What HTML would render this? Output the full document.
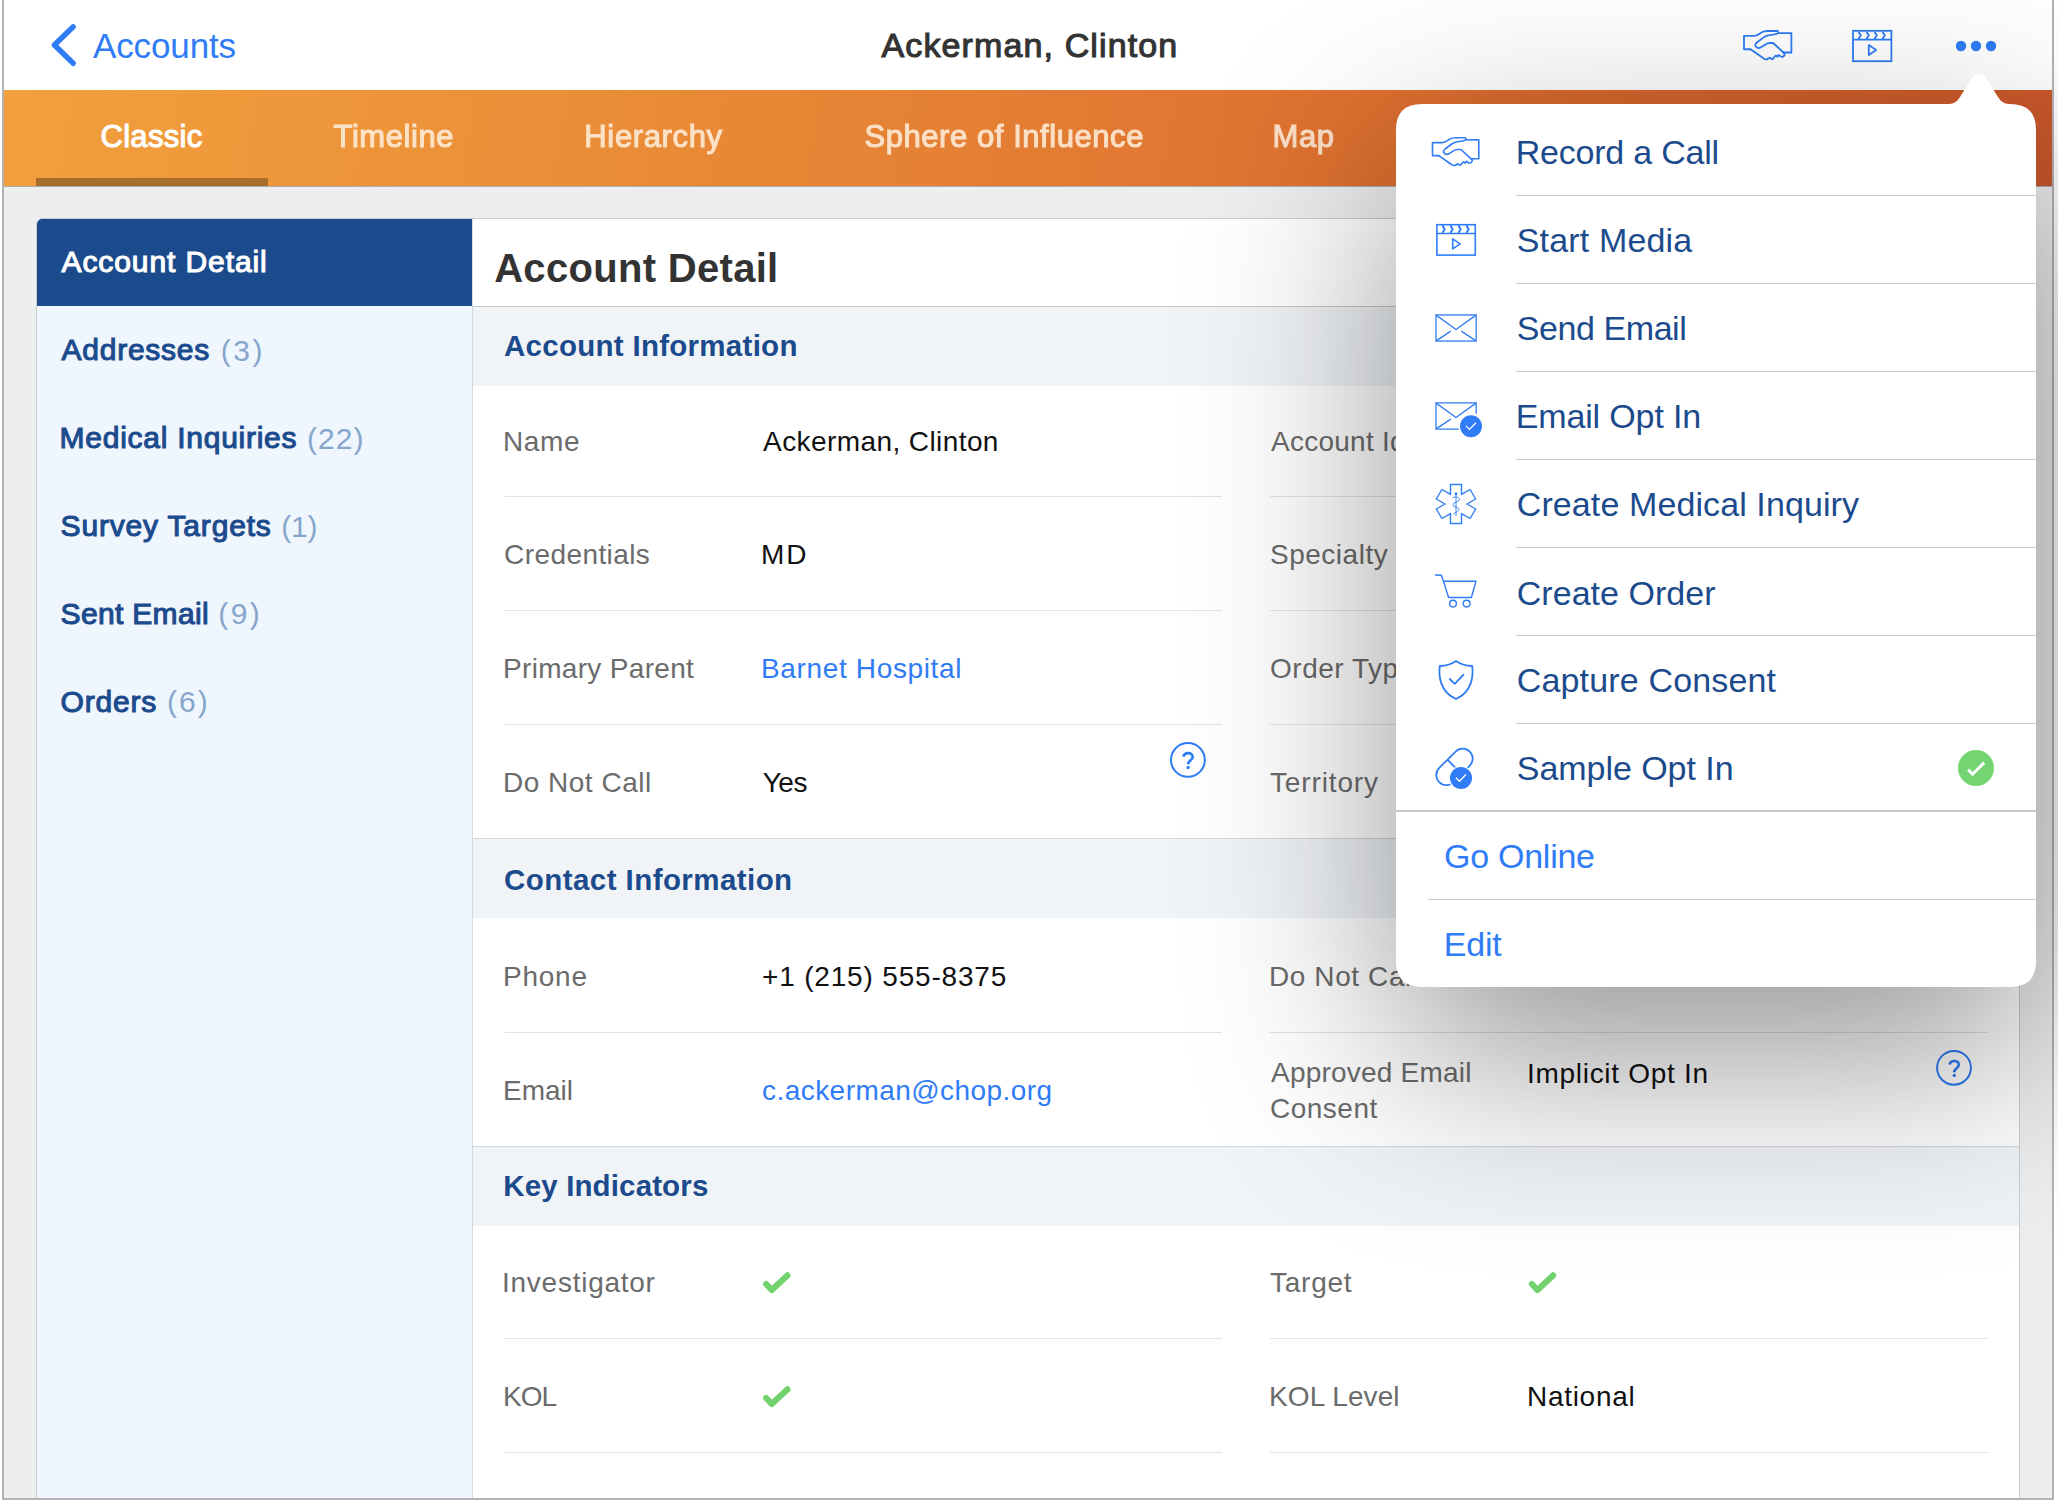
<!DOCTYPE html>
<html><head><meta charset="utf-8"><style>
html,body{margin:0;padding:0;width:2058px;height:1502px;overflow:hidden;background:#fff}
.a{position:absolute}
.t{position:absolute;white-space:nowrap;font-family:"Liberation Sans",sans-serif}
</style></head><body>
<div class="a" style="left:0px;top:0px;width:2058px;height:1502px;background:#ffffff;"></div>
<div class="a" style="left:4px;top:186px;width:2048px;height:1312px;background:#edeef0;"></div>
<div class="a" style="left:4px;top:0px;width:2048px;height:90px;background:#ffffff;"></div>
<div class="a" style="left:4px;top:90px;width:2048px;height:96px;background:linear-gradient(100deg,#f2a03d 0%,#ec9239 22%,#e58034 46%,#dd6e2f 70%,#c9572a 100%);"></div>
<div class="a" style="left:4px;top:186px;width:2048px;height:1px;background:#a9adb2;"></div>
<div class="a" style="left:36px;top:178px;width:232px;height:8px;background:#a86e2b;"></div>
<div class="t" style="left:100.43px;top:121.42px;font-size:31px;line-height:31px;font-weight:normal;color:#ffffff;letter-spacing:0.337px;-webkit-text-stroke:1.1px #ffffff;">Classic</div>
<div class="t" style="left:333.55px;top:121.42px;font-size:31px;line-height:31px;font-weight:normal;color:#fff0de;letter-spacing:0.557px;-webkit-text-stroke:1.1px #fff0de;opacity:0.86;">Timeline</div>
<div class="t" style="left:584.37px;top:121.42px;font-size:31px;line-height:31px;font-weight:normal;color:#fff0de;letter-spacing:0.628px;-webkit-text-stroke:1.1px #fff0de;opacity:0.86;">Hierarchy</div>
<div class="t" style="left:864.49px;top:121.42px;font-size:31px;line-height:31px;font-weight:normal;color:#fff0de;letter-spacing:0.560px;-webkit-text-stroke:1.1px #fff0de;opacity:0.86;">Sphere of Influence</div>
<div class="t" style="left:1272.55px;top:121.42px;font-size:31px;line-height:31px;font-weight:normal;color:#fff0de;letter-spacing:0.510px;-webkit-text-stroke:1.1px #fff0de;opacity:0.86;">Map</div>
<div class="t" style="left:92.94px;top:27.91px;font-size:35.0px;line-height:35.0px;font-weight:normal;color:#2f7cf6;letter-spacing:-0.117px;">Accounts</div>
<div class="t" style="left:881.55px;top:27.87px;font-size:34px;line-height:34px;font-weight:normal;color:#333333;letter-spacing:1.119px;-webkit-text-stroke:1.1px #333333;">Ackerman, Clinton</div>
<div class="a" style="left:36px;top:218px;width:1984px;height:1281px;background:#ffffff;border:1px solid #c9cbce;box-sizing:border-box;border-radius:6px 6px 0 0;"></div>
<div class="a" style="left:37px;top:219px;width:435px;height:1279px;background:#eff6fd;"></div>
<div class="a" style="left:472px;top:219px;width:1px;height:1279px;background:#d6d9dd;"></div>
<div class="a" style="left:37px;top:219px;width:435px;height:87px;background:#1c4b8d;border-top-left-radius:5px;"></div>
<div class="t" style="left:61.55px;top:246.95px;font-size:30px;line-height:30px;font-weight:normal;color:#ffffff;letter-spacing:0.906px;-webkit-text-stroke:1.1px #ffffff;">Account Detail</div>
<div class="t" style="left:61.55px;top:335.29px;font-size:30px;line-height:30px;font-weight:normal;color:#1c4b8d;letter-spacing:0.752px;-webkit-text-stroke:1.1px #1c4b8d;">Addresses</div>
<div class="t" style="left:220.82px;top:335.99px;font-size:30px;line-height:30px;font-weight:normal;color:#86a6cc;letter-spacing:2.470px;">(3)</div>
<div class="t" style="left:59.55px;top:422.95px;font-size:30px;line-height:30px;font-weight:normal;color:#1c4b8d;letter-spacing:0.744px;-webkit-text-stroke:1.1px #1c4b8d;">Medical Inquiries</div>
<div class="t" style="left:307.00px;top:423.65px;font-size:30px;line-height:30px;font-weight:normal;color:#86a6cc;letter-spacing:1.020px;">(22)</div>
<div class="t" style="left:60.55px;top:510.61px;font-size:30px;line-height:30px;font-weight:normal;color:#1c4b8d;letter-spacing:0.829px;-webkit-text-stroke:1.1px #1c4b8d;">Survey Targets</div>
<div class="t" style="left:281.24px;top:512.01px;font-size:30px;line-height:30px;font-weight:normal;color:#86a6cc;letter-spacing:-0.180px;">(1)</div>
<div class="t" style="left:60.55px;top:598.79px;font-size:30px;line-height:30px;font-weight:normal;color:#1c4b8d;letter-spacing:0.336px;-webkit-text-stroke:1.1px #1c4b8d;">Sent Email</div>
<div class="t" style="left:218.30px;top:599.49px;font-size:30px;line-height:30px;font-weight:normal;color:#86a6cc;letter-spacing:2.410px;">(9)</div>
<div class="t" style="left:60.55px;top:686.63px;font-size:30px;line-height:30px;font-weight:normal;color:#1c4b8d;letter-spacing:0.828px;-webkit-text-stroke:1.1px #1c4b8d;">Orders</div>
<div class="t" style="left:167.00px;top:687.33px;font-size:30px;line-height:30px;font-weight:normal;color:#86a6cc;letter-spacing:2.030px;">(6)</div>
<div class="a" style="left:473px;top:306px;width:1546px;height:1px;background:#c8c8c8;"></div>
<div class="t" style="left:494.18px;top:248.20px;font-size:40px;line-height:40px;font-weight:bold;color:#333333;letter-spacing:0.308px;">Account Detail</div>
<div class="a" style="left:473px;top:307px;width:1546px;height:79px;background:#f1f4f7;"></div>
<div class="t" style="left:504.00px;top:330.89px;font-size:29.5px;line-height:29.5px;font-weight:bold;color:#1c4b8d;letter-spacing:0.278px;">Account Information</div>
<div class="a" style="left:473px;top:838px;width:1546px;height:1px;background:#d4d6d9;"></div>
<div class="a" style="left:473px;top:839px;width:1546px;height:79px;background:#f1f4f7;"></div>
<div class="t" style="left:504.12px;top:864.55px;font-size:29.5px;line-height:29.5px;font-weight:bold;color:#1c4b8d;letter-spacing:0.431px;">Contact Information</div>
<div class="a" style="left:473px;top:1146px;width:1546px;height:1px;background:#d4d6d9;"></div>
<div class="a" style="left:473px;top:1147px;width:1546px;height:79px;background:#f1f4f7;"></div>
<div class="t" style="left:503.30px;top:1171.07px;font-size:29.5px;line-height:29.5px;font-weight:bold;color:#1c4b8d;letter-spacing:0.131px;">Key Indicators</div>
<div class="a" style="left:505px;top:496px;width:717px;height:1px;background:#e3e3e3;"></div>
<div class="a" style="left:1270px;top:496px;width:718px;height:1px;background:#e3e3e3;"></div>
<div class="a" style="left:505px;top:610px;width:717px;height:1px;background:#e3e3e3;"></div>
<div class="a" style="left:1270px;top:610px;width:718px;height:1px;background:#e3e3e3;"></div>
<div class="a" style="left:505px;top:724px;width:717px;height:1px;background:#e3e3e3;"></div>
<div class="a" style="left:1270px;top:724px;width:718px;height:1px;background:#e3e3e3;"></div>
<div class="a" style="left:505px;top:1032px;width:717px;height:1px;background:#e3e3e3;"></div>
<div class="a" style="left:1270px;top:1032px;width:718px;height:1px;background:#e3e3e3;"></div>
<div class="a" style="left:505px;top:1338px;width:717px;height:1px;background:#e3e3e3;"></div>
<div class="a" style="left:1270px;top:1338px;width:718px;height:1px;background:#e3e3e3;"></div>
<div class="a" style="left:505px;top:1452px;width:717px;height:1px;background:#e3e3e3;"></div>
<div class="a" style="left:1270px;top:1452px;width:718px;height:1px;background:#e3e3e3;"></div>
<div class="t" style="left:503.00px;top:427.70px;font-size:28px;line-height:28px;font-weight:normal;color:#6b6b6b;letter-spacing:0.627px;">Name</div>
<div class="t" style="left:763.06px;top:427.70px;font-size:28px;line-height:28px;font-weight:normal;color:#111111;letter-spacing:0.415px;">Ackerman, Clinton</div>
<div class="t" style="left:504.00px;top:541.04px;font-size:28px;line-height:28px;font-weight:normal;color:#6b6b6b;letter-spacing:0.424px;">Credentials</div>
<div class="t" style="left:761.06px;top:541.04px;font-size:28px;line-height:28px;font-weight:normal;color:#111111;letter-spacing:1.940px;">MD</div>
<div class="t" style="left:503.00px;top:655.20px;font-size:28px;line-height:28px;font-weight:normal;color:#6b6b6b;letter-spacing:0.317px;">Primary Parent</div>
<div class="t" style="left:761.06px;top:655.20px;font-size:28px;line-height:28px;font-weight:normal;color:#2f7cf6;letter-spacing:0.643px;">Barnet Hospital</div>
<div class="t" style="left:503.00px;top:769.04px;font-size:28px;line-height:28px;font-weight:normal;color:#6b6b6b;letter-spacing:0.500px;">Do Not Call</div>
<div class="t" style="left:762.76px;top:769.04px;font-size:28px;line-height:28px;font-weight:normal;color:#111111;letter-spacing:-0.500px;">Yes</div>
<div class="t" style="left:503.00px;top:963.04px;font-size:28px;line-height:28px;font-weight:normal;color:#6b6b6b;letter-spacing:0.750px;">Phone</div>
<div class="t" style="left:762.06px;top:963.04px;font-size:28px;line-height:28px;font-weight:normal;color:#111111;letter-spacing:0.816px;">+1 (215) 555-8375</div>
<div class="t" style="left:503.00px;top:1077.04px;font-size:28px;line-height:28px;font-weight:normal;color:#6b6b6b;letter-spacing:0.000px;">Email</div>
<div class="t" style="left:762.06px;top:1077.04px;font-size:28px;line-height:28px;font-weight:normal;color:#2f7cf6;letter-spacing:0.444px;">c.ackerman@chop.org</div>
<div class="t" style="left:502.00px;top:1269.04px;font-size:28px;line-height:28px;font-weight:normal;color:#6b6b6b;letter-spacing:0.744px;">Investigator</div>
<div class="t" style="left:503.00px;top:1383.04px;font-size:28px;line-height:28px;font-weight:normal;color:#6b6b6b;letter-spacing:-1.000px;">KOL</div>
<div class="t" style="left:1271.00px;top:427.54px;font-size:28px;line-height:28px;font-weight:normal;color:#6b6b6b;letter-spacing:0.256px;">Account Identifier</div>
<div class="t" style="left:1270.00px;top:541.04px;font-size:28px;line-height:28px;font-weight:normal;color:#6b6b6b;letter-spacing:0.507px;">Specialty</div>
<div class="t" style="left:1270.00px;top:655.04px;font-size:28px;line-height:28px;font-weight:normal;color:#6b6b6b;letter-spacing:0.517px;">Order Type</div>
<div class="t" style="left:1270.00px;top:769.04px;font-size:28px;line-height:28px;font-weight:normal;color:#6b6b6b;letter-spacing:0.868px;">Territory</div>
<div class="t" style="left:1269.00px;top:963.04px;font-size:28px;line-height:28px;font-weight:normal;color:#6b6b6b;letter-spacing:0.600px;">Do Not Call</div>
<div class="t" style="left:1271.00px;top:1058.88px;font-size:28px;line-height:28px;font-weight:normal;color:#6b6b6b;letter-spacing:0.212px;">Approved Email</div>
<div class="t" style="left:1270.00px;top:1094.52px;font-size:28px;line-height:28px;font-weight:normal;color:#6b6b6b;letter-spacing:0.500px;">Consent</div>
<div class="t" style="left:1526.94px;top:1059.54px;font-size:28px;line-height:28px;font-weight:normal;color:#111111;letter-spacing:0.719px;">Implicit Opt In</div>
<div class="t" style="left:1270.00px;top:1269.04px;font-size:28px;line-height:28px;font-weight:normal;color:#6b6b6b;letter-spacing:0.752px;">Target</div>
<div class="t" style="left:1269.00px;top:1383.04px;font-size:28px;line-height:28px;font-weight:normal;color:#6b6b6b;letter-spacing:0.110px;">KOL Level</div>
<div class="t" style="left:1527.00px;top:1383.04px;font-size:28px;line-height:28px;font-weight:normal;color:#111111;letter-spacing:0.706px;">National</div>
<svg class="a" style="left:0;top:0" width="2058" height="1502"><path d="M73.2,26.8 L54.4,45 L73.2,63.3" fill="none" stroke="#2f7cf6" stroke-width="5.4" stroke-linecap="round" stroke-linejoin="round"/><g transform="translate(1731.21,12.80) scale(1.0235)" stroke="#2f7cf6"><g fill="none" stroke-width="1.75875" stroke-linejoin="round" stroke-linecap="round"><path d="M18,35.6 L12.5,35.6 L12.5,22.5 L22,22.6 C25.5,22.6 27.5,20.5 29.5,19.3 C31.5,18 33.5,17.8 35,17.8 L45.3,17.8 L46.3,19.8 L58.8,19.9 L58.8,38.8 L51,38.8"/><path d="M45.8,19.9 C44.5,21 41.5,21.3 39,21.5 C36,21.8 34,22.5 32.5,23.5 L25,29 C22.5,31 23.5,34.6 27,34.4 C29,34.3 31,32.4 33,31.1 C35,29.8 36,29.5 37.5,29.5 L41,29.5 L51,38.8"/><path d="M18,35.6 C19,35.6 19.6,36 20.6,36.8 L31.5,44.5 C33,45.7 34.5,45.8 36,45 L37.5,43.8 L39.5,45 C40.6,45.6 41.6,44.6 41.6,43.5 L43.6,41.8 L45.2,43 L46.2,41.3 L48.6,42.8 C50,43.5 51.5,42.5 52,41.5 C52.5,40.5 52.2,39.5 51,38.8"/></g></g><g transform="translate(1852.20,30.00) scale(1.0000)" stroke="#2f7cf6"><g fill="none" stroke-width="1.8"><rect x="0.8" y="0.8" width="38.4" height="30.4"/><path d="M0.8,9.6 L39.2,9.6"/><path d="M6.2,1.4 L8.6,5.3 L6.2,9.2 M14.2,1.4 L16.6,5.3 L14.2,9.2 M22.2,1.4 L24.6,5.3 L22.2,9.2 M30.2,1.4 L32.6,5.3 L30.2,9.2" stroke-linejoin="round" stroke-width="1.9"/><path d="M16.6,15 L16.6,25 L24,20 Z" stroke-linejoin="round"/></g></g><circle cx="1961" cy="46" r="5.2" fill="#2f7cf6"/><circle cx="1976" cy="46" r="5.2" fill="#2f7cf6"/><circle cx="1991" cy="46" r="5.2" fill="#2f7cf6"/><g transform="translate(1187.9,759.9)"><circle cx="0" cy="0" r="16.9" fill="none" stroke="#2f7cf6" stroke-width="2"/><path d="M-4.5,-3.3 C-3.9,-5.7 -2,-6.8 0.3,-6.8 C3,-6.8 4.8,-5.1 4.8,-3 C4.8,-1.2 3.6,-0.3 2.3,0.7 C1,1.7 0.3,2.6 0.3,4.4" fill="none" stroke="#2f7cf6" stroke-width="2.7" stroke-linecap="butt"/><circle cx="0.25" cy="7.6" r="1.65" fill="#2f7cf6"/></g><g transform="translate(1954,1067.8)"><circle cx="0" cy="0" r="16.9" fill="none" stroke="#2f7cf6" stroke-width="2"/><path d="M-4.5,-3.3 C-3.9,-5.7 -2,-6.8 0.3,-6.8 C3,-6.8 4.8,-5.1 4.8,-3 C4.8,-1.2 3.6,-0.3 2.3,0.7 C1,1.7 0.3,2.6 0.3,4.4" fill="none" stroke="#2f7cf6" stroke-width="2.7" stroke-linecap="butt"/><circle cx="0.25" cy="7.6" r="1.65" fill="#2f7cf6"/></g><path d="M766.1999999999999,1284 L771.6999999999999,1290 L787.4,1275.4" fill="none" stroke="#72d36e" stroke-width="6.2" stroke-linecap="round" stroke-linejoin="round"/><path d="M766.1999999999999,1398 L771.6999999999999,1404 L787.4,1389.4" fill="none" stroke="#72d36e" stroke-width="6.2" stroke-linecap="round" stroke-linejoin="round"/><path d="M1531.9,1284 L1537.4,1290 L1553.1,1275.4" fill="none" stroke="#72d36e" stroke-width="6.2" stroke-linecap="round" stroke-linejoin="round"/></svg>
<div class="a" style="left:2px;top:0px;width:2px;height:1500px;background:#b5b1b6;"></div>
<div class="a" style="left:2052px;top:0px;width:2px;height:1500px;background:#b5b1b6;"></div>
<div class="a" style="left:2px;top:1498px;width:2052px;height:2px;background:#b5b1b6;"></div>
<svg class="a" style="left:0;top:0;filter:drop-shadow(0px 70px 100px rgba(0,0,0,0.42))" width="2058" height="1502"><path d="M1422,104 L1949,104 C1955,104 1958.2,100.2 1961,95.6 L1972.6,77.2 C1975.6,72.6 1982.4,72.6 1985.4,77.2 L1997,95.6 C1999.8,100.2 2003,104 2009,104 L2010,104 Q2036,104 2036,130 L2036,961 Q2036,987 2010,987 L1422,987 Q1396,987 1396,961 L1396,130 Q1396,104 1422,104 Z" fill="#ffffff"/></svg>
<div class="a" style="left:1516px;top:195px;width:520px;height:1px;background:#c8c7cc;"></div>
<div class="a" style="left:1516px;top:283px;width:520px;height:1px;background:#c8c7cc;"></div>
<div class="a" style="left:1516px;top:371px;width:520px;height:1px;background:#c8c7cc;"></div>
<div class="a" style="left:1516px;top:459px;width:520px;height:1px;background:#c8c7cc;"></div>
<div class="a" style="left:1516px;top:547px;width:520px;height:1px;background:#c8c7cc;"></div>
<div class="a" style="left:1516px;top:635px;width:520px;height:1px;background:#c8c7cc;"></div>
<div class="a" style="left:1516px;top:723px;width:520px;height:1px;background:#c8c7cc;"></div>
<div class="a" style="left:1396px;top:810px;width:640px;height:2px;background:#c8c7cc;"></div>
<div class="a" style="left:1428px;top:899px;width:608px;height:1px;background:#c8c7cc;"></div>
<div class="t" style="left:1515.76px;top:135.27px;font-size:34px;line-height:34px;font-weight:normal;color:#1c4b8d;letter-spacing:-0.215px;">Record a Call</div>
<div class="t" style="left:1516.76px;top:223.43px;font-size:34px;line-height:34px;font-weight:normal;color:#1c4b8d;letter-spacing:0.160px;">Start Media</div>
<div class="t" style="left:1516.76px;top:310.93px;font-size:34px;line-height:34px;font-weight:normal;color:#1c4b8d;letter-spacing:-0.424px;">Send Email</div>
<div class="t" style="left:1515.76px;top:398.93px;font-size:34px;line-height:34px;font-weight:normal;color:#1c4b8d;letter-spacing:-0.149px;">Email Opt In</div>
<div class="t" style="left:1516.76px;top:486.93px;font-size:34px;line-height:34px;font-weight:normal;color:#1c4b8d;letter-spacing:0.101px;">Create Medical Inquiry</div>
<div class="t" style="left:1516.76px;top:575.61px;font-size:34px;line-height:34px;font-weight:normal;color:#1c4b8d;letter-spacing:0.033px;">Create Order</div>
<div class="t" style="left:1516.76px;top:663.09px;font-size:34px;line-height:34px;font-weight:normal;color:#1c4b8d;letter-spacing:0.160px;">Capture Consent</div>
<div class="t" style="left:1516.76px;top:751.09px;font-size:34px;line-height:34px;font-weight:normal;color:#1c4b8d;letter-spacing:-0.043px;">Sample Opt In</div>
<div class="t" style="left:1444.00px;top:838.75px;font-size:34px;line-height:34px;font-weight:normal;color:#2f7cf6;letter-spacing:-0.257px;">Go Online</div>
<div class="t" style="left:1443.82px;top:926.93px;font-size:34px;line-height:34px;font-weight:normal;color:#2f7cf6;letter-spacing:-0.213px;">Edit</div>
<svg class="a" style="left:0;top:0" width="2058" height="1502"><g transform="translate(1420.00,120.00) scale(1.0000)" stroke="#2f7cf6"><g fill="none" stroke-width="1.6" stroke-linejoin="round" stroke-linecap="round"><path d="M18,35.6 L12.5,35.6 L12.5,22.5 L22,22.6 C25.5,22.6 27.5,20.5 29.5,19.3 C31.5,18 33.5,17.8 35,17.8 L45.3,17.8 L46.3,19.8 L58.8,19.9 L58.8,38.8 L51,38.8"/><path d="M45.8,19.9 C44.5,21 41.5,21.3 39,21.5 C36,21.8 34,22.5 32.5,23.5 L25,29 C22.5,31 23.5,34.6 27,34.4 C29,34.3 31,32.4 33,31.1 C35,29.8 36,29.5 37.5,29.5 L41,29.5 L51,38.8"/><path d="M18,35.6 C19,35.6 19.6,36 20.6,36.8 L31.5,44.5 C33,45.7 34.5,45.8 36,45 L37.5,43.8 L39.5,45 C40.6,45.6 41.6,44.6 41.6,43.5 L43.6,41.8 L45.2,43 L46.2,41.3 L48.6,42.8 C50,43.5 51.5,42.5 52,41.5 C52.5,40.5 52.2,39.5 51,38.8"/></g></g><g transform="translate(1436.10,223.90) scale(1.0000)" stroke="#2f7cf6"><g fill="none" stroke-width="1.6"><rect x="0.8" y="0.8" width="38.4" height="30.4"/><path d="M0.8,9.6 L39.2,9.6"/><path d="M6.2,1.4 L8.6,5.3 L6.2,9.2 M14.2,1.4 L16.6,5.3 L14.2,9.2 M22.2,1.4 L24.6,5.3 L22.2,9.2 M30.2,1.4 L32.6,5.3 L30.2,9.2" stroke-linejoin="round" stroke-width="1.9"/><path d="M16.6,15 L16.6,25 L24,20 Z" stroke-linejoin="round"/></g></g><g fill="none" stroke="#2f7cf6" stroke-width="1.3"><rect x="1435.95" y="314.95" width="40.2" height="26.099999999999998"/><path d="M1436.1,315.1 L1456.05,329.5 L1476.0,315.1"/><path d="M1436.1,340.9 L1450.8,331.1 M1476.0,340.9 L1461.3,331.1"/></g><g fill="none" stroke="#2f7cf6" stroke-width="1.3"><path d="M1458.8,429.05 L1435.95,429.05 L1435.95,402.95 L1476.1499999999999,402.95 L1476.1499999999999,413.8"/><path d="M1436.1,403.1 L1456.05,417.5 L1476.0,403.1"/><path d="M1436.1,428.9 L1450.8,419.1"/></g><circle cx="1471" cy="426.2" r="11" fill="#2f7cf6"/><path d="M1466,425.9 L1469.4,429.4 L1476,422.7" fill="none" stroke="#fff" stroke-width="1.3"/><polygon points="1450.50,484.50 1461.50,484.50 1461.50,494.47 1470.14,489.49 1475.64,499.01 1467.00,504.00 1475.64,508.99 1470.14,518.51 1461.50,513.53 1461.50,523.50 1450.50,523.50 1450.50,513.53 1441.86,518.51 1436.36,508.99 1445.00,504.00 1436.36,499.01 1441.86,489.49 1450.50,494.47" fill="none" stroke="#2f7cf6" stroke-width="1.4" stroke-linejoin="round"/><g fill="none" stroke="#2f7cf6" stroke-width="0.9"><path d="M1456,492.5 L1456,516"/><path d="M1452.5,498 C1454,496.5 1459.5,496.5 1459.5,499.5 C1459.5,502 1453,502 1453,505 C1453,507.5 1459,507 1459,509.5 C1459,511.5 1455,512 1453,514.5"/></g><circle cx="1456" cy="494" r="1.4" fill="#2f7cf6"/><g fill="none" stroke="#2f7cf6" stroke-width="1.4" stroke-linejoin="round" stroke-linecap="round"><path d="M1435.5,575 L1441.5,575.3 L1448.6,597.5 L1471.4,597.5 L1476,581.3 L1443.8,581.3"/><circle cx="1453" cy="603.6" r="3.4"/><circle cx="1466.6" cy="603.6" r="3.4"/></g><g fill="none" stroke="#2f7cf6" stroke-width="1.8" stroke-linejoin="round" stroke-linecap="round"><path d="M1456,661 C1451,664.5 1446,666 1439.8,666 C1438.5,676 1440,692 1456,699 C1472,692 1473.5,676 1472.2,666 C1466,666 1461,664.5 1456,661 Z"/><path d="M1449.8,679 L1454.7,683.8 L1463.5,674.7"/></g><g transform="translate(1454.5,766.8) rotate(-45)"><rect x="-21.6" y="-10" width="43.2" height="20" rx="10" fill="none" stroke="#2f7cf6" stroke-width="1.75"/><path d="M0,-10 L0,10" stroke="#2f7cf6" stroke-width="1.75"/></g><circle cx="1461" cy="778" r="12.3" fill="#fff"/><circle cx="1461" cy="778" r="11" fill="#2f7cf6"/><path d="M1456,777.7 L1459.4,781.2 L1466,774.5" fill="none" stroke="#fff" stroke-width="1.3"/><circle cx="1976" cy="768" r="18" fill="#74d472"/><path d="M1968.2,769.6 L1972.6,774.2 L1984.2,762.6" fill="none" stroke="#fff" stroke-width="3"/></svg>
</body></html>
